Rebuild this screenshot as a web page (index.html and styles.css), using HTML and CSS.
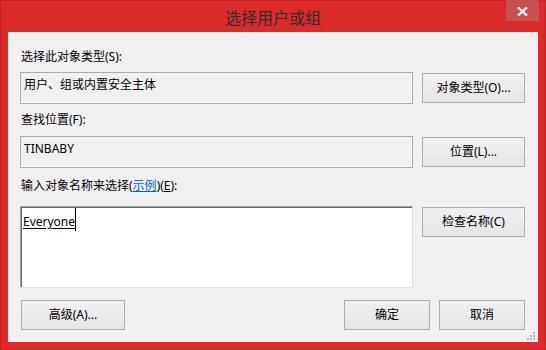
FILE: index.html
```html
<!DOCTYPE html>
<html lang="zh-CN">
<head>
<meta charset="utf-8">
<title>选择用户或组</title>
<link rel="stylesheet" href="styles.css">
</head>
<body>
<div class="window">
  <div class="titlebar">
    <div class="title">选择用户或组</div>
    <div class="close">
      <svg width="11" height="9" viewBox="0 0 11 9"><path d="M1 0.5 L10 8.5 M10 0.5 L1 8.5" stroke="#fff" stroke-width="2.2" fill="none"/></svg>
    </div>
  </div>
  <div class="client">
    <div class="label l1">选择此对象类型(S):</div>
    <div class="row r1">
      <div class="field">用户、组或内置安全主体</div>
      <div class="btn side">对象类型(O)...</div>
    </div>
    <div class="label l2">查找位置(F):</div>
    <div class="row r2">
      <div class="field">TINBABY</div>
      <div class="btn side">位置(L)...</div>
    </div>
    <div class="label l3">输入对象名称来选择(<span class="link">示例</span>)(<span class="acc">E</span>):</div>
    <div class="row r3">
      <div class="edit"><span class="name">Everyone</span><span class="caret"></span></div>
      <div class="btn side">检查名称(C)</div>
    </div>
    <div class="bottom">
      <div class="btn adv">高级(A)...</div>
      <div class="spacer"></div>
      <div class="btn ok">确定</div>
      <div class="btn ok">取消</div>
    </div>
    <div class="grip">
      <span></span><span></span><span></span><span></span><span></span><span></span>
    </div>
  </div>
</div>
</body>
</html>
```
FILE: styles.css
```css
html, body {
  margin: 0;
  padding: 0;
}
body {
  width: 546px;
  height: 350px;
  overflow: hidden;
  background: #da2a2a;
  font-family: "Noto Sans", "Noto Sans CJK SC", sans-serif;
  font-size: 12px;
  color: #000;
}
.window {
  width: 546px;
  height: 350px;
  box-sizing: border-box;
  background: #da2a2a;
  border: 1px solid #c42222;
  display: flex;
  flex-direction: column;
}
.titlebar {
  height: 31px;
  display: flex;
  justify-content: center;
  position: relative;
}
.title {
  font-family: "Noto Sans CJK SC", sans-serif;
  font-size: 16px;
  line-height: 16px;
  margin-top: 8px;
  color: #2f2f2f;
}
.close {
  position: absolute;
  right: 6px;
  top: -1px;
  width: 33px;
  height: 21px;
  background: #c75050;
  display: flex;
  align-items: center;
  justify-content: center;
}
.close svg { display: block; margin-top: 1px; }
.client {
  margin: 0 7px 7px 7px;
  flex: 1;
  background: #f0f0f0;
  padding: 0 13px 0 12px;
  display: flex;
  flex-direction: column;
  position: relative;
}
.label {
  height: 16px;
  line-height: 16px;
  padding-left: 1px;
}
.l1 { margin-top: 17px; }
.l2 { margin-top: 8px; }
.l3 { margin-top: 10px; }
.row {
  display: flex;
  gap: 9px;
  align-items: flex-start;
}
.r1 { margin-top: 7px; }
.r2 { margin-top: 8px; }
.r3 { margin-top: 12px; }
.field {
  width: 393px;
  height: 32px;
  box-sizing: border-box;
  border: 1px solid #acacac;
  box-shadow: inset -1px -1px 0 #fff;
  padding: 4px 3px;
  line-height: 16px;
}
.edit {
  width: 393px;
  height: 82px;
  box-sizing: border-box;
  background: #fff;
  border-style: solid;
  border-width: 1px;
  border-color: #a0a0a0 #e3e3e3 #e3e3e3 #a0a0a0;
  box-shadow: inset 1px 1px 0 #696969;
  padding: 7px 2px 0 2px;
  line-height: 16px;
  display: flex;
  align-items: flex-start;
}
.name {
  text-decoration: underline;
  text-underline-offset: 2px;
}
.caret {
  display: inline-block;
  width: 1px;
  height: 23px;
  background: #000;
  margin-top: -6px;
}
.btn {
  height: 30px;
  box-sizing: border-box;
  border: 1px solid #acacac;
  background: linear-gradient(#f0f0f0, #e5e5e5);
  display: flex;
  align-items: center;
  justify-content: center;
  line-height: 16px;
}
.side {
  width: 103px;
  margin-top: 1px;
}
.bottom {
  margin-top: 12px;
  display: flex;
  gap: 9px;
}
.spacer { flex: 1; }
.adv { width: 104px; margin-left: 1px; }
.ok { width: 86px; }
.link {
  color: #0066cc;
  text-decoration: underline;
}
.acc { text-decoration: underline; }
.grip {
  position: absolute;
  right: 3px;
  bottom: 2px;
  width: 8px;
  height: 8px;
  display: grid;
  grid-template-columns: repeat(3, 2px);
  grid-template-rows: repeat(3, 2px);
  gap: 1px;
}
.grip span { background: #b8b8b8; }
.grip span:nth-child(1) { grid-column: 3; grid-row: 1; }
.grip span:nth-child(2) { grid-column: 2; grid-row: 2; }
.grip span:nth-child(3) { grid-column: 3; grid-row: 2; }
.grip span:nth-child(4) { grid-column: 1; grid-row: 3; }
.grip span:nth-child(5) { grid-column: 2; grid-row: 3; }
.grip span:nth-child(6) { grid-column: 3; grid-row: 3; }
```
